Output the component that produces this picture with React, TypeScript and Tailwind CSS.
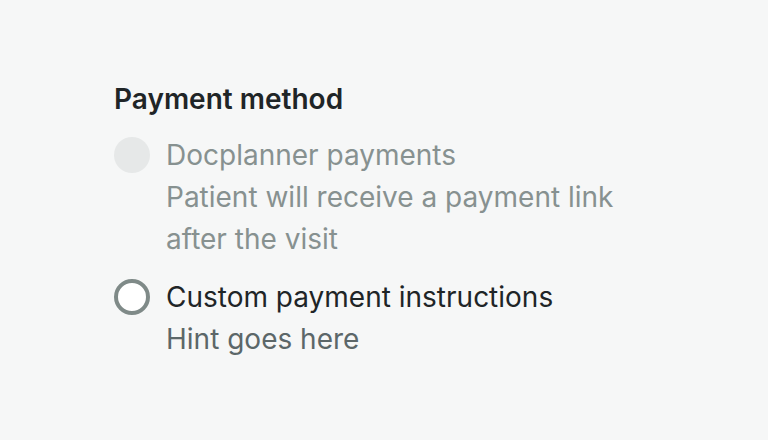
export default function App() {
  return (
    <div className="min-h-screen w-full bg-[#f6f7f7] pt-[80px] pl-[114px] font-['Inter',sans-serif]">
      <fieldset>
        <legend className="text-[28px] leading-[38px] font-semibold text-[#1f2527]">Payment method</legend>
        <div className="mt-[16px] flex flex-col gap-[16px]">
          <label className="flex items-start gap-[16px]">
            <span className="mt-[3px] h-[36px] w-[36px] shrink-0 rounded-full bg-[#e6e8e8]" />
            <span className="flex flex-col text-[28px] leading-[42px] text-[#879190]">
              <span>Docplanner payments</span>
              <span>Patient will receive a payment link<br />after the visit</span>
            </span>
          </label>
          <label className="flex items-start gap-[16px]">
            <span className="mt-[3px] h-[36px] w-[36px] shrink-0 rounded-full border-[4px] border-[#7f8a88] bg-white" />
            <span className="flex flex-col text-[28px] leading-[42px]">
              <span className="text-[#1f2527]">Custom payment instructions</span>
              <span className="text-[#5c6769]">Hint goes here</span>
            </span>
          </label>
        </div>
      </fieldset>
    </div>
  );
}
